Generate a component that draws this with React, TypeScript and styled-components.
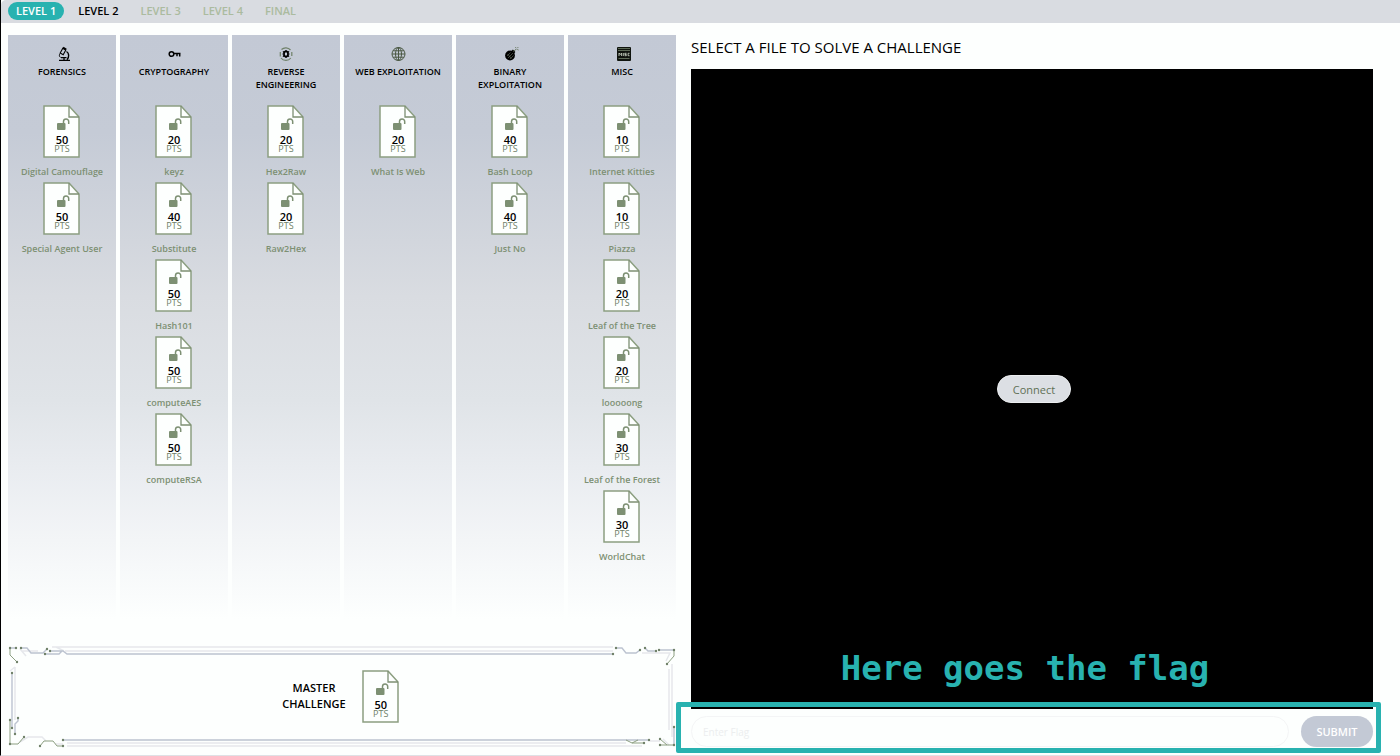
import React from "react";
import styled, { createGlobalStyle, css } from "styled-components";

const teal = "#28b2b0";
const sage = "#7d9073";
const sageLight = "#abbb9f";
const steel = "#c3c9d5";

const GlobalStyle = createGlobalStyle`
  *, *::before, *::after { box-sizing: border-box; }
  body {
    margin: 0;
    background: #fdfffe;
    color: #000;
    font-family: "Open Sans", "Noto Sans", sans-serif;
  }
  button, input { font-family: inherit; }
`;

const Page = styled.div`
  display: flex;
  flex-direction: column;
  min-height: 100vh;
  border-left: 1px solid #000;
  border-bottom: 1px solid #dfe1e5;
`;

const LevelBar = styled.nav`
  display: flex;
  align-items: center;
  gap: 6px;
  height: 23px;
  padding: 0 7px 1px;
  background: #d9dce1;
  border-top-left-radius: 5px;
`;

type LevelState = "active" | "open" | "locked";

const LevelButton = styled.button<{ $state: LevelState }>`
  height: 18px;
  padding: 0 8px;
  border: 0;
  border-radius: 9px;
  background: none;
  font-size: 11px;
  font-weight: 600;
  line-height: 18px;
  white-space: nowrap;
  color: ${sageLight};
  ${({ $state }) => $state === "open" && css`color: #000;`}
  ${({ $state }) => $state === "active" && css`
    color: #fff;
    background: ${teal};
  `}
`;

const Main = styled.main`
  flex: 1;
  display: grid;
  grid-template-columns: minmax(0, 668fr) minmax(0, 682fr);
  gap: 15px;
  padding: 12px 27px 0 7px;
`;

const Board = styled.div`
  display: flex;
  flex-direction: column;
`;

const Columns = styled.div`
  flex: 1;
  display: grid;
  grid-template-columns: repeat(6, minmax(0, 1fr));
  gap: 4px;
`;

const Column = styled.section`
  display: flex;
  flex-direction: column;
  align-items: center;
  padding-top: 10px;
  background: linear-gradient(
    #c3c9d5 0%,
    #c5cbd6 16%,
    #d2d6dd 34%,
    #d9dce1 43%,
    #e0e4e8 60%,
    #e9ecf0 71%,
    #f3f5f7 83%,
    #fdfffe 96%
  );
`;

const ColumnHead = styled.header`
  display: flex;
  flex-direction: column;
  align-items: center;
  gap: 2px;
  height: 60px;
  svg { width: 18px; height: 18px; }
`;

const ColumnTitle = styled.h2`
  max-width: 92px;
  margin: 0;
  font-size: 9px;
  font-weight: 600;
  line-height: 13px;
  text-align: center;
`;

const FileButton = styled.button`
  display: flex;
  flex-direction: column;
  align-items: center;
  gap: 8px;
  height: 77px;
  padding: 0;
  border: 0;
  background: none;
`;

const Sheet = styled.span`
  display: grid;
  width: 38px;
  height: 53px;
  > * { grid-area: 1 / 1; }
`;

const Points = styled.span`
  display: flex;
  flex-direction: column;
  align-items: center;
  padding-top: 29px;
  font-size: 11px;
  font-weight: 600;
  line-height: 11px;
  color: #000;
  small {
    font-size: 9px;
    font-weight: 400;
    line-height: 8px;
    color: #6f8068;
  }
`;

const FileName = styled.span`
  font-size: 9px;
  font-weight: 600;
  line-height: 12px;
  white-space: nowrap;
  color: ${sage};
`;

const Master = styled.section`
  display: grid;
  height: 111px;
  > * { grid-area: 1 / 1; }
`;

const MasterFrame = styled.svg`
  width: 100%;
  height: 104px;
`;

const MasterContent = styled.div`
  display: flex;
  align-items: center;
  justify-content: center;
  gap: 16px;
  height: 104px;
  padding-right: 2px;
`;

const MasterTitle = styled.h2`
  margin: 0;
  font-size: 11px;
  font-weight: 600;
  line-height: 16px;
  text-align: center;
`;

const Workspace = styled.div`
  display: flex;
  flex-direction: column;
`;

const Prompt = styled.h1`
  margin: 0;
  height: 34px;
  font-size: 15px;
  font-weight: 400;
  line-height: 24px;
`;

const Terminal = styled.div`
  position: relative;
  flex: 1;
  display: flex;
  align-items: center;
  justify-content: center;
  padding-left: 4px;
  background: #000;
`;

const ConnectButton = styled.button`
  width: 74px;
  height: 28px;
  padding: 0;
  border: 1px solid #eceef0;
  border-radius: 14px;
  background: #dcdfe4;
  font-size: 11px;
  color: #5f7056;
`;

const FlagNote = styled.p`
  position: absolute;
  left: 0;
  right: 14px;
  bottom: 20px;
  margin: 0;
  font-family: "DejaVu Sans Mono", monospace;
  font-size: 34px;
  font-weight: 700;
  line-height: 42px;
  text-align: center;
  color: ${teal};
`;

const FlagForm = styled.form`
  position: relative;
  display: flex;
  gap: 12px;
  height: 46px;
  padding: 7px 0 8px;
`;

const FlagInput = styled.input`
  flex: 1;
  min-width: 0;
  padding: 0 11px;
  border: 1px solid #f4f5f6;
  border-radius: 16px;
  background: transparent;
  font-size: 10px;
  &::placeholder { color: #eceeef; opacity: 1; }
`;

const SubmitButton = styled.button`
  width: 72px;
  padding: 0;
  border: 0;
  border-radius: 16px;
  background: ${steel};
  font-size: 11px;
  font-weight: 600;
  color: #fff;
`;

const Highlight = styled.div`
  position: absolute;
  inset: -7px -8px 2px -15px;
  border: 5px solid ${teal};
  border-radius: 2px;
  pointer-events: none;
`;

const MicroscopeIcon = () => (
  <svg viewBox="0 0 18 18" fill="none" stroke="#000" aria-hidden="true">
    <path d="M6 15.400h11M8 12.600h5.500M11 12.600v2.500" strokeWidth="1.300" />
    <path d="M9.800 3.200 12.800 5l-2.600 4.800-3-1.700z" strokeWidth="1.100" />
    <path d="m10 2.600 3.200 1.900" strokeWidth="2" />
    <path d="M13.500 6.500c2.600 1.500 3 5.500.500 8.300" strokeWidth="1.400" />
    <path d="M7 8.500c-1 1.500-.8 3 .6 4" strokeWidth="1" />
  </svg>
);

const KeyIcon = () => (
  <svg viewBox="0 0 18 18" fill="none" stroke="#000" strokeWidth="1.500" aria-hidden="true">
    <circle cx="6.500" cy="9" r="2.300" />
    <path d="M9 8.500h6.500M12 8.500v2.800M14.700 8.500v3" />
  </svg>
);

const ReverseIcon = () => (
  <svg viewBox="0 0 18 18" fill="none" aria-hidden="true">
    <path d="M4.500 4.500A6.200 6.200 0 0 1 13.500 5M4 13a6.200 6.200 0 0 0 9.800 0M3.300 7v4.500M14.800 7v4" stroke="#6f8068" strokeWidth="1.200" />
    <ellipse cx="9" cy="9" rx="2" ry="2.600" stroke="#000" strokeWidth="1.600" />
    <path d="M9 5v1.500M9 11.500V13M6 6.300l1.200 1.200M10.800 10.500l1.200 1.200M12 6.300l-1.200 1.200M7.200 10.500 6 11.700M5.500 9H7M11 9h1.500" stroke="#000" strokeWidth="1.200" />
  </svg>
);

const GlobeIcon = () => (
  <svg viewBox="0 0 18 18" fill="none" stroke="#4a5843" strokeWidth="1" aria-hidden="true">
    <circle cx="9.500" cy="9" r="6.500" />
    <ellipse cx="9.500" cy="9" rx="3" ry="6.500" />
    <path d="M9.500 2.500v13M3 9h13M4 5.800h11M4 12.200h11" />
  </svg>
);

const BombIcon = () => (
  <svg viewBox="0 0 18 18" fill="none" aria-hidden="true">
    <circle cx="9" cy="10.500" r="4.900" fill="#000" />
    <path d="m11 5.500 2.500 2.500" stroke="#000" strokeWidth="2.500" />
    <path d="M12.500 6.500c.8-1.500 2-1 2.800-2.500M14.500 2.200l.500 1M17.200 2.200l-1 1M17.500 5l-1.200-.500" stroke="#5f7056" strokeWidth="1" />
    <path d="m6 11 3.500-3.500M7 13l5-5M9 14l3.500-3.500M6.500 9l4 4.500" stroke="#66705f" strokeWidth=".6" />
  </svg>
);

const MiscIcon = () => (
  <svg viewBox="0 0 18 18" fill="none" aria-hidden="true">
    <rect x="4" y="2" width="14" height="14" rx="1" fill="#10140e" />
    <path d="M5 3.500h12M5 5.500h12M5.500 13.500h11" stroke="#71806a" strokeWidth=".8" />
    <path d="M6 11V8l1.300 1.500L8.600 8v3M10.300 8v3M13.500 8.300h-1.700v1.200h1.500v1.200h-1.700M16.500 8.300h-1.400v2.400h1.400" stroke="#c5cec0" strokeWidth=".9" />
  </svg>
);

const FileGraphic = () => (
  <svg width="37" height="53" viewBox="0 0 37 53" fill="none" aria-hidden="true">
    <path d="M1 1h25l10 11v40H1z" fill="#fdfffe" stroke="#8c9f81" strokeWidth="1.500" />
    <path d="M26 1v11h10" stroke="#7d9073" strokeWidth="1.300" />
    <rect x="14" y="18" width="8.500" height="7" rx="1" fill={sage} />
    <path d="M20.500 18.500V16.500a2.600 2.600 0 0 1 5.200 0V19" stroke={sage} strokeWidth="1.500" />
  </svg>
);

interface Challenge {
  name: string;
  points: number;
}

interface Category {
  title: string;
  Icon: React.FC;
  files: Challenge[];
}

const categories: Category[] = [
  {
    title: "FORENSICS",
    Icon: MicroscopeIcon,
    files: [
      { name: "Digital Camouflage", points: 50 },
      { name: "Special Agent User", points: 50 },
    ],
  },
  {
    title: "CRYPTOGRAPHY",
    Icon: KeyIcon,
    files: [
      { name: "keyz", points: 20 },
      { name: "Substitute", points: 40 },
      { name: "Hash101", points: 50 },
      { name: "computeAES", points: 50 },
      { name: "computeRSA", points: 50 },
    ],
  },
  {
    title: "REVERSE ENGINEERING",
    Icon: ReverseIcon,
    files: [
      { name: "Hex2Raw", points: 20 },
      { name: "Raw2Hex", points: 20 },
    ],
  },
  { title: "WEB EXPLOITATION", Icon: GlobeIcon, files: [{ name: "What Is Web", points: 20 }] },
  {
    title: "BINARY EXPLOITATION",
    Icon: BombIcon,
    files: [
      { name: "Bash Loop", points: 40 },
      { name: "Just No", points: 40 },
    ],
  },
  {
    title: "MISC",
    Icon: MiscIcon,
    files: [
      { name: "Internet Kitties", points: 10 },
      { name: "Piazza", points: 10 },
      { name: "Leaf of the Tree", points: 20 },
      { name: "looooong", points: 20 },
      { name: "Leaf of the Forest", points: 30 },
      { name: "WorldChat", points: 30 },
    ],
  },
];

const levels: { label: string; state: LevelState }[] = [
  { label: "LEVEL 1", state: "active" },
  { label: "LEVEL 2", state: "open" },
  { label: "LEVEL 3", state: "locked" },
  { label: "LEVEL 4", state: "locked" },
  { label: "FINAL", state: "locked" },
];

const ChallengeSheet = ({ points }: { points: number }) => (
  <Sheet>
    <FileGraphic />
    <Points>
      {points}
      <small>PTS</small>
    </Points>
  </Sheet>
);

const circuitNodes = [
  [2, 4], [8, 4], [9, 18], [13, 4], [39, 5], [37, 10], [42, 7], [605, 10], [4, 29], [4, 84],
  [10, 74], [7, 90], [2, 76], [2, 100], [16, 93], [32, 102], [55, 102], [55, 96], [608, 4],
  [632, 6], [648, 7], [637, 4], [651, 6], [666, 6], [659, 20], [666, 83], [666, 101],
  [652, 101], [652, 95], [636, 99], [641, 96],
];

const CircuitFrame = () => (
  <MasterFrame viewBox="0 0 668 104" preserveAspectRatio="none" fill="none" aria-hidden="true">
    <path
      d="M44 3H605M57 7H605M7 23V76M661 25V86M664 20V93M59 99H618M59 102H634M12 5l6 7M14 7h16M48 3l8 4M2 27l5-4M12 98l8-5h14l4 4M47 100h8M634 9h10M644 9h18l-4 8M642 97h10M655 95l6 6"
      stroke="#e6e8ec"
      strokeWidth="1.500"
    />
    <path
      d="M2 4H8M13 4H19L23 9H35L39 5M37 10H51L54 7M42 7H55L59 10H605M4 29V84M10 74V77L7 80V90M55 96H641M608 4H614L618 9H628L632 6M637 4L640 7H648M651 6H666M666 83V101"
      stroke="#bcc3d0"
      strokeWidth="1.400"
    />
    <path
      d="M2 4V11L9 18M2 76V100H10L16 93M32 102L36 97H45L49 102H55M618 96L624 99H636M624 99L630 96M666 6V12L659 20M666 101H652M652 95L659 101"
      stroke="#8c9f81"
    />
    {circuitNodes.map(([x, y]) => (
      <circle key={`${x}-${y}`} cx={x} cy={y} r="1.200" fill="#6f8068" />
    ))}
  </MasterFrame>
);

export default function App() {
  return (
    <>
      <GlobalStyle />
      <Page>
        <LevelBar aria-label="Levels">
          {levels.map(({ label, state }) => (
            <LevelButton key={label} type="button" $state={state} disabled={state === "locked"}>
              {label}
            </LevelButton>
          ))}
        </LevelBar>
        <Main>
          <Board>
            <Columns>
              {categories.map(({ title, Icon, files }) => (
                <Column key={title}>
                  <ColumnHead>
                    <Icon />
                    <ColumnTitle>{title}</ColumnTitle>
                  </ColumnHead>
                  {files.map(({ name, points }) => (
                    <FileButton key={name} type="button">
                      <ChallengeSheet points={points} />
                      <FileName>{name}</FileName>
                    </FileButton>
                  ))}
                </Column>
              ))}
            </Columns>
            <Master>
              <CircuitFrame />
              <MasterContent>
                <MasterTitle>
                  MASTER
                  <br />
                  CHALLENGE
                </MasterTitle>
                <ChallengeSheet points={50} />
              </MasterContent>
            </Master>
          </Board>
          <Workspace>
            <Prompt>SELECT A FILE TO SOLVE A CHALLENGE</Prompt>
            <Terminal>
              <ConnectButton type="button">Connect</ConnectButton>
              <FlagNote>Here goes the flag</FlagNote>
            </Terminal>
            <FlagForm onSubmit={(event) => event.preventDefault()}>
              <FlagInput type="text" placeholder="Enter Flag" aria-label="Enter Flag" />
              <SubmitButton type="submit">SUBMIT</SubmitButton>
              <Highlight />
            </FlagForm>
          </Workspace>
        </Main>
      </Page>
    </>
  );
}
